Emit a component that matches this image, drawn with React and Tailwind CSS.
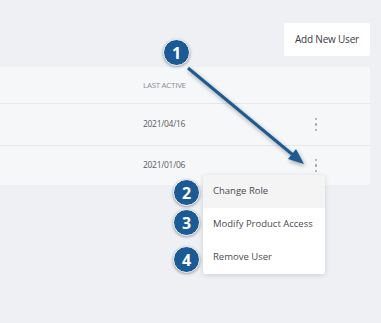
import React from 'react';

const Badge = ({ n, className }) => (
  <div
    className={`absolute w-[27px] h-[27px] rounded-full bg-[#1b5a95] border-[1.5px] border-white shadow-[0_1px_3px_rgba(0,0,0,0.35)] flex items-center justify-center text-white text-[16px] font-bold leading-none ${className}`}
  >
    {n}
  </div>
);

const Kebab = () => (
  <div className="flex flex-col items-center gap-[3px] w-[6px]">
    <span className="w-[2.5px] h-[2.5px] rounded-full bg-[#a3a5aa]" />
    <span className="w-[2.5px] h-[2.5px] rounded-full bg-[#a3a5aa]" />
    <span className="w-[2.5px] h-[2.5px] rounded-full bg-[#a3a5aa]" />
  </div>
);

const rows = [
  { id: 1, date: '2021/04/16', h: 'h-[42px] border-b border-[#e6e7eb]' },
  { id: 2, date: '2021/01/06', h: 'h-[39px]' },
];

const menuItems = [
  { label: 'Change Role', active: true },
  { label: 'Modify Product Access' },
  { label: 'Remove User' },
];

export default function App() {
  return (
    <div className="relative w-[381px] h-[323px] overflow-hidden bg-[#eff0f4] font-['Open_Sans',sans-serif]">
      <div className="flex justify-end pt-[23px] pr-[11px]">
        <button className="w-[86px] h-[33px] bg-white rounded-[2px] text-[10px] text-[#3a3b3f] tracking-[-0.2px]">
          Add New User
        </button>
      </div>

      {/* users table */}
      <div className="mt-[11px] w-[370px] bg-[#f6f7f9] rounded-r-[3px]">
        <div className="h-[37px] flex items-center pl-[143px] border-b border-[#e6e7eb] text-[8px] uppercase text-[#8c8d92] tracking-[-0.3px]">
          Last Active
        </div>
        {rows.map((row) => (
          <div key={row.id} className={`flex items-center pl-[143px] ${row.h}`}>
            <span className="w-[170px] text-[8.5px] text-[#5a5c61] tracking-[-0.3px]">{row.date}</span>
            <Kebab />
          </div>
        ))}
      </div>

      {/* dropdown menu */}
      <div className="absolute left-[203px] top-[175px] w-[122px] bg-white rounded-[2px] shadow-[0_1px_5px_rgba(0,0,0,0.15)]">
        {menuItems.map((item) => (
          <div
            key={item.label}
            className={`h-[33px] flex items-center pl-[10px] text-[9.5px] text-[#4a4b50] ${item.active ? 'bg-[#f4f4f5]' : ''}`}
          >
            {item.label}
          </div>
        ))}
      </div>

      {/* annotation arrow */}
      <svg className="absolute inset-0 drop-shadow-[1px_2px_2px_rgba(0,0,0,0.35)]" width="381" height="323">
        <line x1="188" y1="68" x2="293" y2="155" stroke="#1d5b92" strokeWidth="3" />
        <polygon points="304,164 288,159 296,149" fill="#1d5b92" />
      </svg>

      <Badge n="1" className="left-[163px] top-[39px]" />
      <Badge n="2" className="left-[173px] top-[179px]" />
      <Badge n="3" className="left-[173px] top-[209px]" />
      <Badge n="4" className="left-[173px] top-[246px]" />
    </div>
  );
}
